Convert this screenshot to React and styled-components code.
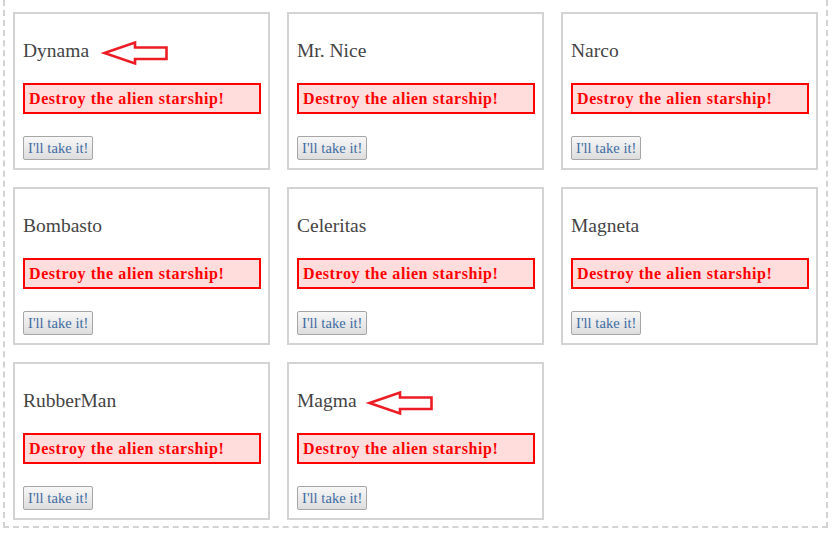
import React from "react";
import styled, { createGlobalStyle } from "styled-components";

const Global = createGlobalStyle`
  html, body { margin: 0; padding: 0; background: #fff; }
  body { font-family: "Liberation Serif", "Times New Roman", serif; }
`;

const Board = styled.div`
  margin: 0 5px 0 3px;
  border: 2px dashed #d3d3d3;
  border-top: 0;
  padding: 12px 8px 6px 8px;
  display: grid;
  grid-template-columns: repeat(3, 257px);
  column-gap: 17px;
  row-gap: 17px;
`;

const Card = styled.div`
  border: 2px solid #d3d3d3;
  padding: 8px 7px 8px 8px;
  height: 158px;
  box-sizing: border-box;
  display: flex;
  flex-direction: column;
  align-items: flex-start;
`;

const Title = styled.h2`
  margin: 17px 0 0 0;
  height: 24px;
  font-size: 19.5px;
  line-height: 24px;
  font-weight: normal;
  color: #444;
`;

const Name = styled.span`
  position: relative;
  display: inline-block;
`;

const ArrowMark = styled.svg`
  position: absolute;
  left: calc(100% + ${(p) => p.$gap}px);
  top: 2px;
  width: 66px;
  height: 24px;
  overflow: visible;
`;

const Mission = styled.div`
  margin-top: 20px;
  align-self: stretch;
  border: 2px solid #ff0000;
  background: #ffdddd;
  color: #ff0000;
  font-weight: bold;
  font-size: 16px;
  letter-spacing: 0.58px;
  line-height: 19px;
  padding: 4px 4px;
`;

const TakeButton = styled.button`
  margin-top: 22px;
  height: 25px;
  padding: 0 4px;
  border: 1px solid #a6a6a6;
  border-radius: 2px;
  background: linear-gradient(#f7f7f7, #dddddd);
  color: #3d6ca3;
  font-family: "Liberation Serif", "Times New Roman", serif;
  font-size: 14.5px;
  letter-spacing: 0.05px;
  line-height: 20px;
  cursor: pointer;
`;

const Arrow = ({ gap }) => (
  <ArrowMark $gap={gap} viewBox="0 0 66 24">
    <path
      d="M1.5 12 L32 1.5 L32 6.5 L63.5 6.5 L63.5 18 L32 18 L32 22.5 Z"
      fill="none"
      stroke="#ed1c24"
      strokeWidth="2.6"
      strokeLinejoin="miter"
    />
  </ArrowMark>
);

const heroes = [
  { name: "Dynama", arrow: 14 },
  { name: "Mr. Nice" },
  { name: "Narco" },
  { name: "Bombasto" },
  { name: "Celeritas" },
  { name: "Magneta" },
  { name: "RubberMan" },
  { name: "Magma", arrow: 11 },
];

export default function App() {
  return (
    <>
      <Global />
      <Board>
        {heroes.map((h) => (
          <Card key={h.name}>
            <Title>
              <Name>
                {h.name}
                {h.arrow ? <Arrow gap={h.arrow} /> : null}
              </Name>
            </Title>
            <Mission>Destroy the alien starship!</Mission>
            <TakeButton>I'll take it!</TakeButton>
          </Card>
        ))}
      </Board>
    </>
  );
}
